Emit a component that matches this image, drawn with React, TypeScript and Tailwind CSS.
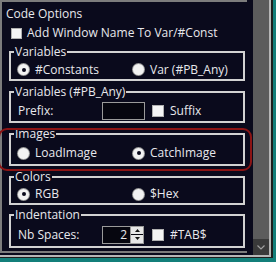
import type React from "react"

function Radio({ checked, label }: { checked?: boolean; label: string }) {
  return (
    <div className="flex items-center">
      <span className="flex h-[11px] w-[11px] items-center justify-center rounded-full bg-[#f2f2f2] shadow-[0_0_0_1px_#9a9a9a]">
        {checked && <span className="h-[4px] w-[4px] rounded-full bg-[#0a0a1c]" />}
      </span>
      <span className="ml-[6px]">{label}</span>
    </div>
  )
}

function Check({ label, box = "w-[11px] h-[11px]", gap = "ml-[5px]" }: { label: string; box?: string; gap?: string }) {
  return (
    <div className="flex items-center">
      <span className={`${box} bg-[#f4f4f4] border border-[#b0b0b0]`} />
      <span className={gap}>{label}</span>
    </div>
  )
}

function Group({ title, className = "", children }: { title: string; className?: string; children: React.ReactNode }) {
  return (
    <fieldset className={`ml-[7px] w-[236px] border-2 border-[#d2d2d2] p-0 ${className}`}>
      <legend className="ml-[3px] px-[1px] leading-[16px]">{title}</legend>
      {children}
    </fieldset>
  )
}

function RadioRow({ a, b, aOn }: { a: string; b: string; aOn: boolean }) {
  return (
    <div className="flex h-full items-center pl-[7px]">
      <div className="w-[115px]">
        <Radio checked={aOn} label={a} />
      </div>
      <Radio checked={!aOn} label={b} />
    </div>
  )
}

export default function App() {
  return (
    <div className="h-[262px] w-[276px] overflow-hidden bg-[#137f7a] font-['Open_Sans',sans-serif] text-[12px] leading-[16px] text-[#e8e8ec]">
      <div className="h-[258px] w-[273px] bg-[#1e1e1e]">
        <div className="flex h-[257px] w-[271px] border-b-2 border-r-2 border-[#b6b6b6]">
          {/* content */}
          <div className="h-[255px] w-[253px] bg-[#0a0a1c]">
            <div className="h-[253px] w-[247px] border-2 border-r-0 border-[#7c7c7c]">
              <div className="mt-[4px] pl-[4px]">Code Options</div>
              <div className="mt-[3px] flex h-[16px] items-center pl-[9px]">
                <Check label="Add Window Name To Var/#Const" />
              </div>

              <Group title="Variables" className="mt-[3px]">
                <div className="h-[19px]">
                  <RadioRow a="#Constants" b="Var (#PB_Any)" aOn />
                </div>
              </Group>

              <Group title="Variables (#PB_Any)" className="mt-[3px]">
                <div className="flex h-[21px] items-center pl-[7px]">
                  <span className="w-[84px]">Prefix:</span>
                  <span className="h-[18px] w-[43px] border border-[#9a9a9a] bg-[#06060f]" />
                  <div className="ml-[7px]">
                    <Check label="Suffix" box="w-[12px] h-[12px]" gap="ml-[6px]" />
                  </div>
                </div>
              </Group>

              <div className="relative mt-[3px]">
                <Group title="Images">
                  <div className="h-[22px]">
                    <RadioRow a="LoadImage" b="CatchImage" aOn={false} />
                  </div>
                </Group>
                <div className="pointer-events-none absolute -bottom-[5px] left-[-4px] right-[-5px] top-[2px] rounded-[9px] border-2 border-[#8c1414]" />
              </div>

              <Group title="Colors" className="mt-[3px]">
                <div className="h-[18px]">
                  <RadioRow a="RGB" b="$Hex" aOn />
                </div>
              </Group>

              <Group title="Indentation" className="mt-[2px]">
                <div className="flex h-[23px] items-center pl-[7px]">
                  <span className="w-[84px]">Nb Spaces:</span>
                  <div className="flex h-[18px]">
                    <span className="flex w-[29px] items-center justify-end border border-[#9a9a9a] bg-[#06060f] pr-[3px]">2</span>
                    <div className="flex w-[13px] flex-col border border-l-0 border-[#9a9a9a] bg-[#06060f]">
                      <span className="flex h-[8px] items-center justify-center bg-[#e6e6e6]">
                        <svg width="5" height="3" viewBox="0 0 5 3"><path d="M2.5 0L5 3H0z" fill="#111" /></svg>
                      </span>
                      <span className="mt-[1px] flex h-[8px] items-center justify-center bg-[#e6e6e6]">
                        <svg width="5" height="3" viewBox="0 0 5 3"><path d="M0 0h5L2.5 3z" fill="#111" /></svg>
                      </span>
                    </div>
                  </div>
                  <div className="ml-[8px]">
                    <Check label="#TAB$" box="w-[12px] h-[12px]" gap="ml-[6px]" />
                  </div>
                </div>
              </Group>
            </div>
          </div>
          {/* scrollbar */}
          <div className="flex h-[255px] w-[16px] flex-col justify-end bg-[#5c5c5c]">
            <div className="flex h-[16px] items-center justify-center bg-[#3a3a3a]">
              <svg width="8" height="5" viewBox="0 0 8 5">
                <path d="M0.5 0.5L4 4L7.5 0.5" fill="none" stroke="#a0a0a0" strokeWidth="1.2" />
              </svg>
            </div>
          </div>
        </div>
      </div>
    </div>
  )
}
